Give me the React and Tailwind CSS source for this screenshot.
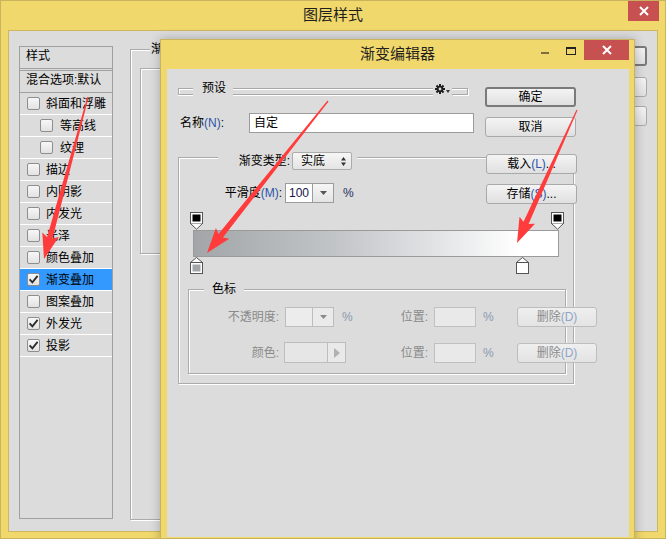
import React from 'react';

// Photoshop "图层样式" window with the "渐变编辑器" dialog on top of it

const etched = 'border border-[#ababab] shadow-[inset_1px_1px_0_#fff,1px_1px_0_#fff]';

const Checkbox = ({ checked }) => (
  <span className="w-[13px] h-[13px] shrink-0 rounded-[2px] border border-[#8e8e8e] bg-linear-to-b from-[#f7f7f7] to-[#e2e2e2] flex items-center justify-center">
    {checked && (
      <svg width="11" height="11" viewBox="0 0 11 11">
        <path d="M1.6 5.4 L4.4 8.4 L9.6 1.9" fill="none" stroke="#2a2a2a" strokeWidth="1.8" />
      </svg>
    )}
  </span>
);

const CloseX = () => (
  <svg width="10" height="10" viewBox="0 0 10 10">
    <path d="M1 1 L9 9 M9 1 L1 9" stroke="#fff" strokeWidth="2" />
  </svg>
);

const Button = ({ children, primary, disabled, narrow, className = '' }) => (
  <div
    className={`shrink-0 h-[20px] rounded-[3px] bg-linear-to-b flex items-center justify-center text-[12px] whitespace-nowrap ${
      narrow ? 'w-[80px]' : 'w-[91px]'
    } ${primary ? 'border-2 border-[#7a7a7a]' : 'border border-[#a9a9a9]'} ${
      disabled ? 'from-[#efefef] to-[#e3e3e3] border-[#bdbdbd] text-[#8a8a8a]' : 'from-[#f4f4f4] to-[#e0e0e0] text-black'
    } ${className}`}
  >
    {children}
  </div>
);

const Mn = ({ children, dim }) => (
  <span className={dim ? 'text-[#8fa6c6]' : 'text-[#2a55a8]'}>{children}</span>
);

const DownTri = ({ color = '#444' }) => (
  <svg width="7" height="4" viewBox="0 0 7 4">
    <path d="M0 0 L7 0 L3.5 4 Z" fill={color} />
  </svg>
);

const Gear = () => (
  <svg width="10" height="10" viewBox="0 0 10 10">
    <g fill="#1e1e1e">
      <circle cx="5" cy="5" r="3.3" />
      <rect x="4" y="0" width="2" height="10" />
      <rect x="0" y="4" width="10" height="2" />
      <rect x="4" y="0" width="2" height="10" transform="rotate(45 5 5)" />
      <rect x="4" y="0" width="2" height="10" transform="rotate(-45 5 5)" />
    </g>
    <circle cx="5" cy="5" r="1.4" fill="#dcdcdc" />
  </svg>
);

const StopTop = ({ fill }) => (
  <svg width="13" height="18" viewBox="0 0 13 18">
    <rect x="0.5" y="0.5" width="12" height="11" fill="#fff" stroke="#555" />
    <rect x="2.5" y="2.5" width="8" height="7" fill={fill} />
    <path d="M0.5 11.5 L6.5 17.2 L12.5 11.5" fill="#fff" stroke="#555" />
  </svg>
);

const StopBottom = ({ fill }) => (
  <svg width="13" height="17" viewBox="0 0 13 17">
    <path d="M0.5 5.5 L6.5 0.5 L12.5 5.5" fill="#fff" stroke="#555" />
    <rect x="0.5" y="5.5" width="12" height="11" fill="#fff" stroke="#555" />
    <rect x="2.5" y="7.5" width="8" height="7" fill={fill} />
  </svg>
);

const styles = [
  { label: '斜面和浮雕' },
  { label: '等高线', sub: true },
  { label: '纹理', sub: true },
  { label: '描边' },
  { label: '内阴影' },
  { label: '内发光' },
  { label: '光泽' },
  { label: '颜色叠加' },
  { label: '渐变叠加', checked: true, selected: true },
  { label: '图案叠加' },
  { label: '外发光', checked: true },
  { label: '投影', checked: true },
];

const opacityStops = [
  { left: -3, fill: '#000' },
  { left: 358, fill: '#000' },
];
const colorStops = [
  { left: -3, fill: '#a3a6a9' },
  { left: 323, fill: '#fff' },
];

function arrowPoints(x1, y1, x2, y2) {
  const L = Math.hypot(x2 - x1, y2 - y1);
  const ux = (x2 - x1) / L;
  const uy = (y2 - y1) / L;
  const nx = -uy;
  const ny = ux;
  const hl = 22;
  const bx = x2 - ux * hl;
  const by = y2 - uy * hl;
  const p = [
    [x1 + nx * 0.6, y1 + ny * 0.6],
    [bx + nx * 2.8, by + ny * 2.8],
    [bx - ux * 3 + nx * 8.5, by - uy * 3 + ny * 8.5],
    [x2, y2],
    [bx - ux * 3 - nx * 8.5, by - uy * 3 - ny * 8.5],
    [bx - nx * 2.8, by - ny * 2.8],
    [x1 - nx * 0.6, y1 - ny * 0.6],
  ];
  return p.map(([x, y]) => `${x.toFixed(1)},${y.toFixed(1)}`).join(' ');
}

const arrows = [
  [88, 97, 44, 259],
  [328, 101, 207, 253],
  [577, 110, 517, 243],
];

const StopRow = ({ label, children }) => (
  <div className="flex items-center">
    <div className="shrink-0 w-[90px] text-right text-[#8a8a8a]">{label}</div>
    <div className="shrink-0 w-[80px] flex items-center">{children}</div>
    <div className="shrink-0 w-[69px] text-right text-[#8a8a8a]">位置:</div>
    <div className="shrink-0 ml-[6px] w-[42px] h-[20px] bg-[#e9e9e9] border border-[#c0c0c0]" />
    <div className="shrink-0 w-[41px] pl-[7px] text-[#8a9ab0]">%</div>
    <Button disabled narrow>
      删除<Mn dim>(D)</Mn>
    </Button>
  </div>
);

const GradientDialog = () => (
  <div className="absolute left-[159px] top-[38px] w-[475px] h-[510px] bg-[#f0d86c] border border-[#c9b35c] shadow-[0_0_10px_rgba(0,0,0,0.25)]">
    <div className="relative h-[29px] flex items-center justify-center">
      <span className="text-[15px] text-[#1f1f1f]">渐变编辑器</span>
      <span className="absolute right-[85px] top-[12px] w-[8px] h-[2px] bg-[#7d6d3f]" />
      <span className="absolute right-[58px] top-[7px] w-[10px] h-[8px] border border-[#222] border-t-2" />
      <span className="absolute right-[5px] top-0 w-[45px] h-[20px] bg-[#c75050] flex items-center justify-center">
        <CloseX />
      </span>
    </div>

    <div className="ml-[6px] mr-[5px] h-[468px] bg-[#dcdcdc] pl-[11px] pt-[12px] text-[12px] text-black">
      <div className="flex">
        <div className="w-[296px]">
          <div className="flex h-[14px] items-start">
            <div className="w-[15px] h-[7px] mt-[7px] border-t border-l border-b border-[#a9a9a9] shadow-[inset_1px_1px_0_#fff,0_1px_0_#fff]" />
            <span className="ml-[9px] leading-[14px]">预设</span>
            <div className="ml-[7px] w-[200px] h-[7px] mt-[7px] border-t border-b border-[#a9a9a9] shadow-[inset_0_1px_0_#fff,0_1px_0_#fff]" />
            <div className="w-[19px] h-[14px] flex items-center justify-center gap-[1px] pt-[1px]">
              <Gear />
              <svg width="4" height="3" viewBox="0 0 4 3" className="mt-[5px]">
                <path d="M0 0 L4 0 L2 3 Z" fill="#333" />
              </svg>
            </div>
            <div className="w-[16px] h-[7px] mt-[7px] border-t border-b border-r border-[#a9a9a9] shadow-[inset_0_1px_0_#fff,1px_1px_0_#fff]" />
          </div>
          <div className="mt-[18px] flex items-center h-[20px]">
            <span className="ml-[2px] w-[69px]">
              名称<Mn>(N)</Mn>:
            </span>
            <div className="w-[225px] h-[20px] bg-white border border-[#9c9c9c] pl-[4px] flex items-center">自定</div>
          </div>
        </div>
        <div className="ml-[11px]">
          <Button primary className="mt-[6px]">确定</Button>
          <Button className="mt-[10px]">取消</Button>
        </div>
      </div>

      <div className={`mt-[20px] w-[396px] h-[227px] ${etched}`}>
        <div className="-mt-[6px] flex justify-between">
          <div>
            <div className="ml-[39px] w-fit h-[18px] bg-[#dcdcdc] pl-[12px] pr-[5px] flex items-center">
              <span className="w-[60px] text-right">渐变类型:</span>
              <div className="relative ml-[2px] w-[60px] h-[18px] rounded-[2px] border border-[#acacac] bg-linear-to-b from-[#f6f6f6] to-[#e4e4e4] pl-[8px] flex items-center">
                实底
                <svg width="5" height="9" viewBox="0 0 5 9" className="absolute right-[5px] top-[4px]">
                  <path d="M0 3.5 L5 3.5 L2.5 0 Z M0 5.5 L5 5.5 L2.5 9 Z" fill="#333" />
                </svg>
              </div>
            </div>
            <div className="mt-[13px] flex items-center h-[20px]">
              <span className="w-[103px] text-right">
                平滑度<Mn>(M)</Mn>:
              </span>
              <div className="ml-[3px] w-[28px] h-[20px] bg-white border border-[#9c9c9c] flex items-center pl-[3px] text-[#141448]">100</div>
              <div className="w-[21px] h-[20px] border border-l-0 border-[#9c9c9c] bg-linear-to-b from-[#f6f6f6] to-[#e4e4e4] flex items-center justify-center">
                <DownTri color="#555" />
              </div>
              <span className="ml-[9px] text-[#1e2e5e]">%</span>
            </div>
          </div>
          <div className="-mr-[4px] pt-[2px] relative">
            <Button>
              载入<Mn>(L)</Mn>...
            </Button>
            <Button className="mt-[10px]">
              存储<Mn>(S)</Mn>...
            </Button>
          </div>
        </div>

        <div className="ml-[14px] mt-[8px] w-[366px]">
          <div className="relative h-[18px]">
            {opacityStops.map((s, i) => (
              <div key={i} className="absolute top-0" style={{ left: s.left }}>
                <StopTop fill={s.fill} />
              </div>
            ))}
          </div>
          <div className="h-[27px] border border-[#9a9a9a] bg-[linear-gradient(90deg,#a3a6a9_0%,#c1c4c7_38%,#e4e5e7_68%,#fff_89%,#fff_100%)]" />
          <div className="relative h-[17px]">
            {colorStops.map((s, i) => (
              <div key={i} className="absolute top-0" style={{ left: s.left }}>
                <StopBottom fill={s.fill} />
              </div>
            ))}
          </div>
        </div>

        <div className={`ml-[9px] mt-[15px] w-[378px] h-[85px] ${etched}`}>
          <div className="-mt-[8px] ml-[15px] w-fit h-[14px] leading-[14px] bg-[#dcdcdc] px-[8px]">色标</div>
          <div className="mt-[11px]">
            <StopRow label="不透明度:">
              <div className="ml-[6px] w-[28px] h-[20px] bg-[#ececec] border border-[#bdbdbd]" />
              <div className="w-[21px] h-[20px] border border-l-0 border-[#bdbdbd] bg-[#eaeaea] flex items-center justify-center">
                <DownTri color="#8a8a8a" />
              </div>
              <span className="ml-[8px] text-[#8a9ab0]">%</span>
            </StopRow>
          </div>
          <div className="mt-[15px]">
            <StopRow label="颜色:">
              <div className="ml-[5px] w-[44px] h-[21px] bg-[#e6e6e6] border border-[#bdbdbd]" />
              <div className="w-[18px] h-[21px] border border-l-0 border-[#bdbdbd] bg-[#e9e9e9] flex items-center justify-center">
                <svg width="6" height="10" viewBox="0 0 6 10">
                  <path d="M0 0 L6 5 L0 10 Z" fill="#b0b0b0" />
                </svg>
              </div>
            </StopRow>
          </div>
        </div>
      </div>
    </div>
  </div>
);

export default function App() {
  return (
    <div className="relative w-[666px] h-[539px] overflow-hidden bg-[#f0d86c] border border-[#c9b35c] font-[Liberation_Sans,Noto_Sans_CJK_SC,sans-serif]">
      {/* outer window title */}
      <div className="h-[29px] flex items-center justify-center">
        <span className="text-[15px] text-[#1f1f1f]">图层样式</span>
      </div>
      <span className="absolute -top-px right-[6px] w-[31px] h-[21px] bg-[#c75050] flex items-center justify-center">
        <CloseX />
      </span>

      <div className="mx-[7px] h-[502px] bg-[#dcdcdc] border border-[#cdb860] flex pl-[10px] pt-[15px] text-[12px] text-black">
        {/* style list */}
        <div className="w-[94px] h-[473px] border border-[#a0a0a0]">
          <div className="h-[22px] border-b border-[#a0a0a0] pl-[6px] pb-[4px] flex items-center">样式</div>
          <div className="mt-[1px] h-[23px] border-t border-b border-[#a0a0a0] pl-[6px] pb-[3px] flex items-center">
            混合选项:默认
          </div>
          {styles.map((s) => (
            <div
              key={s.label}
              className={`h-[22px] border-b border-white flex items-center ${s.sub ? 'pl-[20px]' : 'pl-[7px]'} ${
                s.selected ? 'bg-[#3399ff]' : ''
              }`}
            >
              <Checkbox checked={s.checked} />
              <span className={s.sub ? 'ml-[7px]' : 'ml-[6px]'}>{s.label}</span>
            </div>
          ))}
        </div>

        {/* settings group, mostly hidden by the dialog */}
        <div className={`ml-[17px] mt-[3px] w-[400px] h-[471px] ${etched}`}>
          <div className="-mt-[8px] ml-[19px] w-fit h-[14px] leading-[14px] bg-[#dcdcdc] px-[1px]">渐变叠加</div>
          <div className={`ml-[9px] mt-[12px] w-[380px] h-[186px] ${etched}`} />
        </div>

        {/* outer buttons */}
        <div className="ml-auto mr-[10px]">
          <Button primary>确定</Button>
          <Button className="mt-[11px]">取消</Button>
          <Button className="mt-[9px]">新建样式(W)</Button>
        </div>
      </div>

      <GradientDialog />

      {/* red annotation arrows */}
      <svg className="absolute -left-px -top-px pointer-events-none" width="666" height="539" viewBox="0 0 666 539">
        {arrows.map((a, i) => (
          <polygon key={i} points={arrowPoints(...a)} fill="#ff3b3b" />
        ))}
      </svg>
    </div>
  );
}
